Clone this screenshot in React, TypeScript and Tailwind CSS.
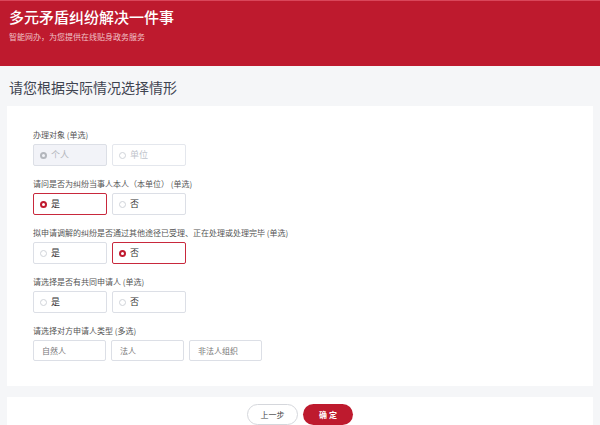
import React from "react";

const F = { fontFamily: '"Noto Sans CJK SC", "Noto Sans", sans-serif' };

function Radio({ label, state }: { label: string; state: "dis-on" | "dis" | "on" | "off" }) {
  const box =
    state === "dis-on"
      ? "bg-[#f2f3f8] border-[#dcdfe6] text-[#b4b7bd]"
      : state === "dis"
      ? "bg-white border-[#e4e7ed] text-[#c0c4cc]"
      : state === "on"
      ? "bg-white border-[#c8283c] text-[#333]"
      : "bg-white border-[#dcdfe6] text-[#333]";
  const dot =
    state === "on" ? (
      <span className="w-[7px] h-[7px] rounded-full border-[2px] border-[#c01b2f]" />
    ) : state === "dis-on" ? (
      <span className="w-[7px] h-[7px] rounded-full border-[2px] border-[#b4b7bd]" />
    ) : (
      <span className="w-[7px] h-[7px] rounded-full border border-[#d0d3d9]" />
    );
  return (
    <div className={`w-[74px] h-[22px] border rounded-[2px] flex items-center gap-[4px] px-[6px] text-[9px] ${box}`}>
      {dot}
      <span>{label}</span>
    </div>
  );
}

function Row({ label, children, mt }: { label: string; children: React.ReactNode; mt: string }) {
  return (
    <div className={mt}>
      <div className="text-[8px] text-[#555] h-[11px] leading-[11px]">{label}</div>
      <div className="flex gap-[5px] mt-[4px]">{children}</div>
    </div>
  );
}

export default function App() {
  return (
    <div style={F} className="w-[600px] h-[425px] bg-[#f5f6f8] overflow-hidden">
      <div className="h-[66px] bg-[#be1a2e] border-t border-[#d9465a] px-[9px] pt-[6px]">
        <div className="text-white text-[15px] leading-[20px] font-medium">多元矛盾纠纷解决一件事</div>
        <div className="text-[#f1c3c8] text-[8px] mt-[4px]">智能网办，为您提供在线贴身政务服务</div>
      </div>
      <div className="px-[9px] pt-[10px] h-[40px] text-[14px] text-[#3f4450] leading-[22px]">请您根据实际情况选择情形</div>
      <div className="mx-[7px] bg-white h-[280px] pl-[26px] pt-[23px]">
        <Row label="办理对象 (单选)" mt="">
          <Radio label="个人" state="dis-on" />
          <Radio label="单位" state="dis" />
        </Row>
        <Row label="请问是否为纠纷当事人本人（本单位） (单选)" mt="mt-[12px]">
          <Radio label="是" state="on" />
          <Radio label="否" state="off" />
        </Row>
        <Row label="拟申请调解的纠纷是否通过其他途径已受理、正在处理或处理完毕 (单选)" mt="mt-[12px]">
          <Radio label="是" state="off" />
          <Radio label="否" state="on" />
        </Row>
        <Row label="请选择是否有共同申请人 (单选)" mt="mt-[12px]">
          <Radio label="是" state="off" />
          <Radio label="否" state="off" />
        </Row>
        <Row label="请选择对方申请人类型 (多选)" mt="mt-[12px]">
          {["自然人", "法人", "非法人组织"].map((t) => (
            <div key={t} className="w-[73px] h-[21px] border border-[#dcdfe6] rounded-[2px] flex items-center px-[8px] text-[8px] text-[#777]">{t}</div>
          ))}
        </Row>
      </div>
      <div className="mx-[7px] mt-[11px] bg-white h-[40px] flex justify-center gap-[5px] pt-[7px]">
        <div className="w-[51px] h-[21px] rounded-full border border-[#d5d7dc] text-[8px] text-[#444] flex items-center justify-center">上一步</div>
        <div className="w-[50px] h-[21px] rounded-full bg-[#be1a2e] text-[8px] text-white font-bold flex items-center justify-center">确 定</div>
      </div>
    </div>
  );
}
